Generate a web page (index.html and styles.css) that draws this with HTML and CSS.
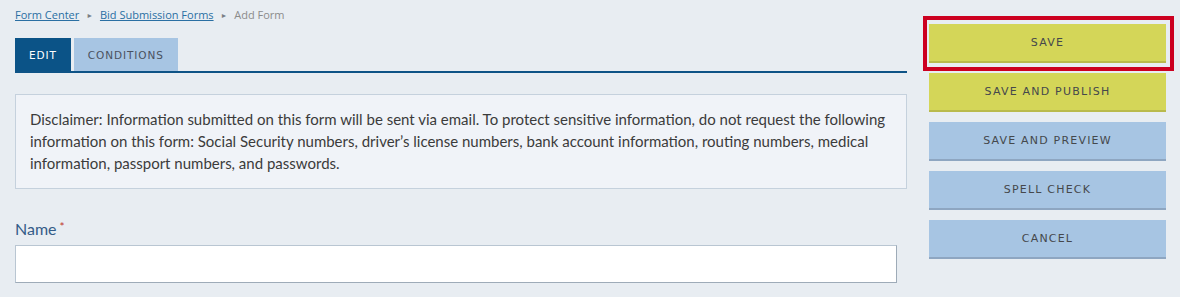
FILE: index.html
```html
<!DOCTYPE html>
<html lang="en">
<head>
<meta charset="utf-8">
<title>Add Form</title>
<link rel="stylesheet" href="styles.css">
</head>
<body>
<div class="page">
  <main class="main">
    <nav class="crumbs">
      <a href="#">Form Center</a>
      <span class="sep">&#9658;</span>
      <a href="#">Bid Submission Forms</a>
      <span class="sep">&#9658;</span>
      <span class="current">Add Form</span>
    </nav>
    <div class="tabs">
      <div class="tab tab-active">EDIT</div>
      <div class="tab">CONDITIONS</div>
    </div>
    <div class="disclaimer">Disclaimer: Information submitted on this form will be sent via email. To protect sensitive information, do not request the following information on this form: Social Security numbers, driver’s license numbers, bank account information, routing numbers, medical information, passport numbers, and passwords.</div>
    <label class="label">Name<span class="req">*</span></label>
    <div class="input"></div>
  </main>
  <aside class="actions">
    <div class="highlight">
      <button class="btn btn-yellow">SAVE</button>
    </div>
    <button class="btn btn-yellow">SAVE AND PUBLISH</button>
    <button class="btn btn-blue">SAVE AND PREVIEW</button>
    <button class="btn btn-blue">SPELL CHECK</button>
    <button class="btn btn-blue">CANCEL</button>
  </aside>
</div>
</body>
</html>
```
FILE: styles.css
```css
html, body {
  margin: 0;
  padding: 0;
  background: #e8edf2;
}
body {
  font-family: "Lato", "Open Sans", sans-serif;
  color: #3d3d3d;
}
.page {
  display: flex;
  align-items: flex-start;
  padding: 0 14px 0 15px;
  gap: 22px;
}
.main {
  width: 892px;
  display: flex;
  flex-direction: column;
}
.crumbs {
  font-family: "Open Sans", sans-serif;
  font-size: 11px;
  line-height: 16px;
  padding-top: 7px;
  height: 31px;
  color: #8b8b8b;
}
.crumbs a {
  color: #2a6fa3;
  text-decoration: underline;
}
.sep {
  font-size: 7px;
  color: #7a7f85;
  margin: 0 4px;
  vertical-align: 1px;
}
.tabs {
  display: flex;
  gap: 3px;
  height: 33px;
  border-bottom: 2px solid #0e5386;
}
.tab {
  font-family: "DejaVu Sans", Verdana, sans-serif;
  font-size: 10.5px;
  letter-spacing: 0.9px;
  padding: 0 14px 0 14px;
  display: flex;
  align-items: center;
  background: #a7c5e3;
  color: #4a5260;
}
.tab-active {
  background: #0b5387;
  color: #ffffff;
  padding: 0 14px;
}
.disclaimer {
  margin-top: 21px;
  border: 1px solid #c5d1dd;
  background: #f0f3f8;
  padding: 13px 14px 14px 14px;
  font-size: 15px;
  line-height: 22px;
  color: #3b3b3b;
}
.label {
  margin-top: 28px;
  font-size: 16px;
  line-height: 20px;
  color: #345c88;
}
.req {
  color: #c0392b;
  font-size: 12px;
  margin-left: 3px;
  vertical-align: 4px;
}
.input {
  margin-top: 6px;
  width: 880px;
  height: 36px;
  background: #ffffff;
  border: 1px solid #b9c6d2;
  border-bottom-color: #9eabb8;
  border-right-color: #9eabb8;
}
.actions {
  width: 237px;
  display: flex;
  flex-direction: column;
  gap: 10px;
  padding-top: 24px;
}
.highlight {
  margin: -8px -8px -8px -6px;
  padding: 4px 4px 4px 2px;
  border: 4px solid #cc0020;
  display: flex;
  flex-direction: column;
}
.btn {
  font-family: "DejaVu Sans", Verdana, sans-serif;
  font-size: 11px;
  letter-spacing: 1.2px;
  height: 39px;
  width: 237px;
  border: none;
  padding: 0;
  margin: 0;
  color: #45484c;
  cursor: pointer;
}
.btn-yellow {
  background: #d4d658;
  border-bottom: 2px solid #b9ba4c;
}
.btn-blue {
  background: #a7c5e3;
  border-bottom: 2px solid #8ea6c1;
}
```
